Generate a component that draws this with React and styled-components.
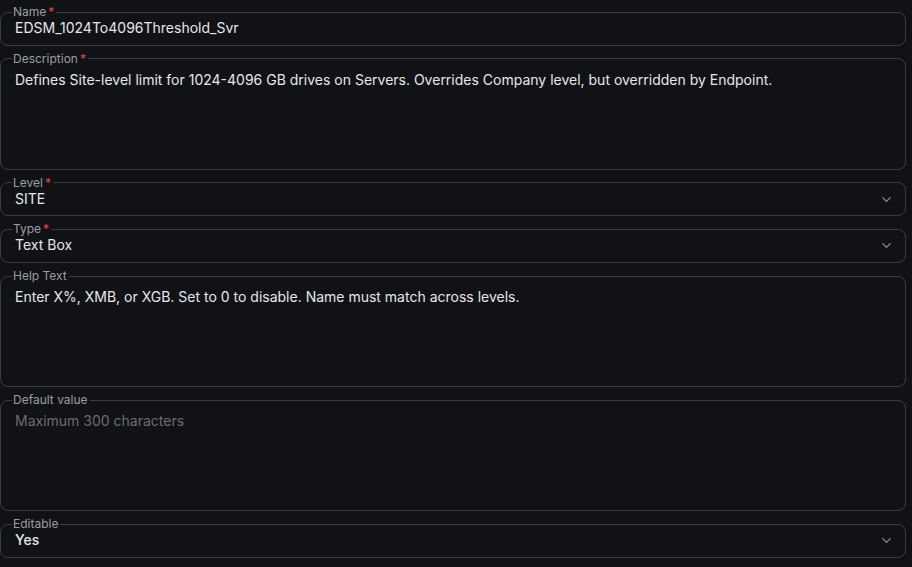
import React from 'react';
import styled, { createGlobalStyle } from 'styled-components';
import { ChevronDown } from 'lucide-react';

const GlobalStyle = createGlobalStyle`
  html, body {
    margin: 0;
    padding: 0;
    background: #111215;
  }
  body {
    font-family: Inter, "Noto Sans", sans-serif;
    -webkit-font-smoothing: antialiased;
  }
`;

const Form = styled.form`
  display: flex;
  flex-direction: column;
  gap: 6px;
  padding: 5px 6px 0 0;
  width: 912px;
  box-sizing: border-box;
`;

const Field = styled.fieldset`
  margin: 0;
  padding: 0 14px 0 14px;
  border: 1px solid #3c3d41;
  border-radius: 8px;
  display: flex;
  align-items: flex-start;
  min-width: 0;
  height: ${p => (p.$multiline ? '118px' : '40.7px')};
  box-sizing: border-box;
`;

const Legend = styled.legend`
  margin-left: -3px;
  padding: 0 2px 0 1px;
  font-size: 12px;
  line-height: 14px;
  color: #9c9da1;
`;

const Required = styled.span`
  color: #e5484d;
  margin-left: 2px;
`;

const Value = styled.div`
  flex: 1;
  padding-top: ${p => (p.$multiline ? '4px' : '0')};
  font-size: 14px;
  line-height: ${p => (p.$multiline ? '20px' : '18px')};
  font-weight: ${p => (p.$strong ? 500 : 400)};
  color: ${p => (p.$placeholder ? '#6c6d71' : '#e6e7ea')};
  white-space: nowrap;
`;

const Chevron = styled(ChevronDown)`
  margin-top: 2px;
  margin-right: -3px;
  color: #8d8e92;
  flex: none;
`;

function FormField({ label, required, value, multiline, select, placeholder, strong }) {
  return (
    <Field $multiline={multiline}>
      <Legend>
        {label}
        {required && <Required>*</Required>}
      </Legend>
      <Value $multiline={multiline} $placeholder={placeholder} $strong={strong}>
        {value}
      </Value>
      {select && <Chevron size={15} strokeWidth={2} />}
    </Field>
  );
}

export default function App() {
  return (
    <>
      <GlobalStyle />
      <Form>
        <FormField label="Name" required value="EDSM_1024To4096Threshold_Svr" />
        <FormField
          label="Description"
          required
          multiline
          value="Defines Site-level limit for 1024-4096 GB drives on Servers. Overrides Company level, but overridden by Endpoint."
        />
        <FormField label="Level" required select value="SITE" />
        <FormField label="Type" required select value="Text Box" />
        <FormField
          label="Help Text"
          multiline
          value="Enter X%, XMB, or XGB. Set to 0 to disable. Name must match across levels."
        />
        <FormField label="Default value" multiline placeholder value="Maximum 300 characters" />
        <FormField label="Editable" select strong value="Yes" />
      </Form>
    </>
  );
}
